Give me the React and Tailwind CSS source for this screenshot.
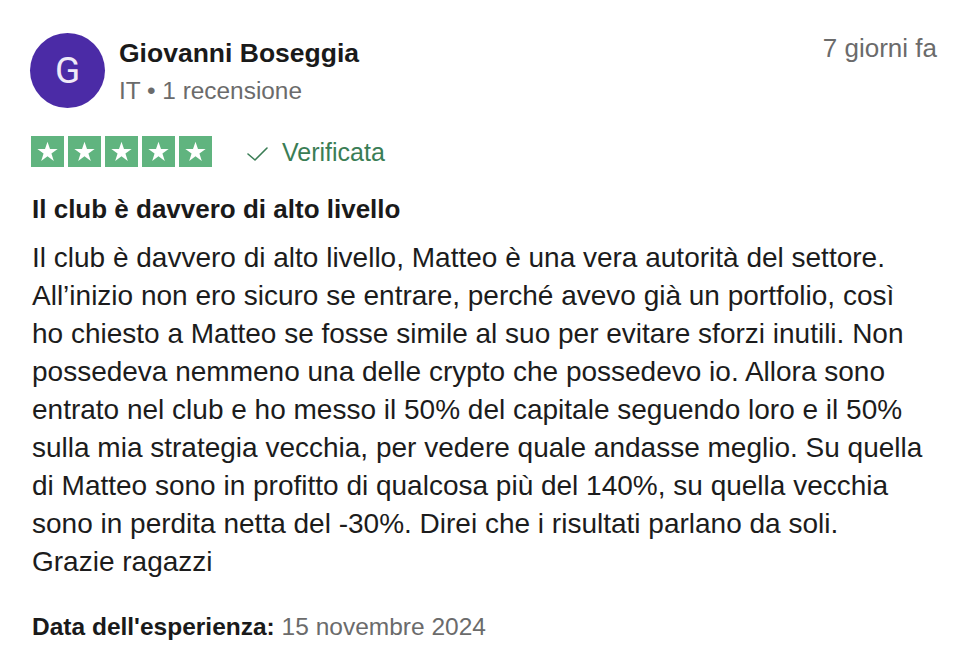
const lines = [
  "Il club è davvero di alto livello, Matteo è una vera autorità del settore.",
  "All’inizio non ero sicuro se entrare, perché avevo già un portfolio, così",
  "ho chiesto a Matteo se fosse simile al suo per evitare sforzi inutili. Non",
  "possedeva nemmeno una delle crypto che possedevo io. Allora sono",
  "entrato nel club e ho messo il 50% del capitale seguendo loro e il 50%",
  "sulla mia strategia vecchia, per vedere quale andasse meglio. Su quella",
  "di Matteo sono in profitto di qualcosa più del 140%, su quella vecchia",
  "sono in perdita netta del -30%. Direi che i risultati parlano da soli.",
  "Grazie ragazzi",
];

export default function App() {
  return (
    <div className="min-h-screen w-full bg-white pl-[30px] pr-[22px] pt-[33px] font-['Liberation_Sans',Arial,sans-serif]">
      <div className="flex items-start">
        <div className="flex h-[75px] w-[75px] shrink-0 items-center justify-center rounded-full bg-[#4b2ba6] font-['Roboto',sans-serif] text-[37px] text-[#efeaf8]">
          G
        </div>

        <div className="ml-[14px] flex flex-col">
          <span className="mt-[4px] text-[26.5px] font-bold leading-[32px] text-[#1a1a1a]">
            Giovanni Boseggia
          </span>
          <span className="mt-[7px] text-[24.4px] leading-[30px] text-[#6b6b6b]">
            IT • 1 recensione
          </span>
        </div>

        <span className="ml-auto text-[26px] leading-[30px] text-[#6b6b6b]">
          7 giorni fa
        </span>
      </div>

      <div className="mt-[27px] flex items-center pl-[1px]">
        <div className="flex gap-[4px]">
          {[0, 1, 2, 3, 4].map((i) => (
            <span
              key={i}
              className="flex h-[31px] w-[33px] items-center justify-center bg-[#60b47f]"
            >
              <StarIcon className="h-[23px] w-[23px]" />
            </span>
          ))}
        </div>

        <span className="ml-[35px] flex items-center gap-[14px] text-[#3a7d55]">
          <CheckIcon className="mt-[4px] h-[15px] w-[21px]" />
          <span className="mt-[2px] text-[25px] leading-[30px]">Verificata</span>
        </span>
      </div>

      <h2 className="mt-[26px] pl-[2px] text-[26px] font-bold leading-[32px] text-[#1a1a1a]">
        Il club è davvero di alto livello
      </h2>

      <p className="mt-[14px] pl-[2px] text-[28px] leading-[38px] text-[#1c1c1c]">
        {lines.map((line, i) => (
          <span key={i} className="block whitespace-nowrap">
            {line}
          </span>
        ))}
      </p>

      <p className="mt-[31px] pl-[2px] text-[24.5px] leading-[30px] text-[#6b6b6b]">
        <span className="font-bold text-[#1a1a1a]">Data dell'esperienza:</span>{" "}
        15 novembre 2024
      </p>
    </div>
  );
}

function StarIcon({ className }) {
  return (
    <svg viewBox="0 0 24 24" aria-hidden="true" className={className}>
      <path
        d="M12 1.8l2.6 7.6h8l-6.5 4.7 2.5 7.7L12 17l-6.6 4.8 2.5-7.7L1.4 9.4h8z"
        fill="#ffffff"
      />
    </svg>
  );
}

function CheckIcon({ className }) {
  return (
    <svg viewBox="0 0 21 15" fill="none" aria-hidden="true" className={className}>
      <path
        d="M1 8l7 6L20 2"
        stroke="currentColor"
        strokeWidth="1.6"
        strokeLinecap="round"
        strokeLinejoin="round"
      />
    </svg>
  );
}
